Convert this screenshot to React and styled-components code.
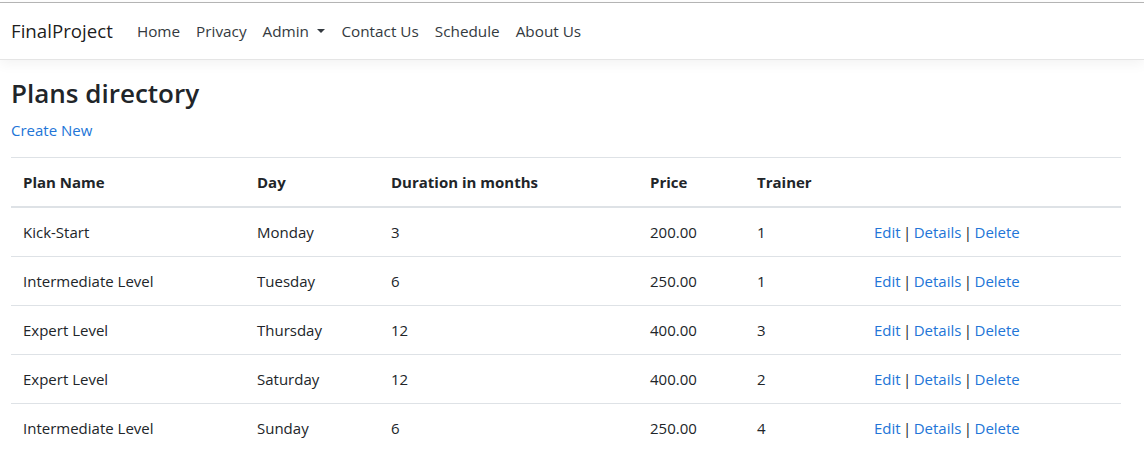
import React from "react";
import styled, { createGlobalStyle } from "styled-components";

const GlobalStyle = createGlobalStyle`
  html, body {
    margin: 0;
    padding: 0;
    background: #fff;
  }
  body {
    font-family: "Segoe UI", "Open Sans", "Noto Sans", sans-serif;
    font-size: 15px;
    line-height: 24px;
    color: #212529;
  }
  * { box-sizing: border-box; }
`;

const Header = styled.header`
  margin-top: 2px;
  border-top: 1px solid #b4b4b4;
  background: #fff;
  border-bottom: 1px solid #e5e5e5;
  box-shadow: 0 4px 12px rgba(0, 0, 0, 0.05);
  margin-bottom: 16px;
`;

const Navbar = styled.nav`
  display: flex;
  align-items: center;
  height: 56px;
  padding: 0 11px;
`;

const Brand = styled.a`
  font-size: 18.7px;
  line-height: 30px;
  color: rgba(0, 0, 0, 0.9);
  text-decoration: none;
  margin-right: 16px;
`;

const NavList = styled.ul`
  display: flex;
  list-style: none;
  margin: 0;
  padding: 0;
`;

const NavLink = styled.a`
  display: block;
  padding: 8px;
  font-size: 15.3px;
  color: #343a40;
  text-decoration: none;
  line-height: 24px;

  ${(p) =>
    p.$dropdown &&
    `
    &::after {
      content: "";
      display: inline-block;
      margin-left: 0.55em;
      vertical-align: 0.255em;
      border-top: 0.3em solid;
      border-right: 0.3em solid transparent;
      border-left: 0.3em solid transparent;
    }
  `}
`;

const Main = styled.main`
  padding: 0 11px;
`;

const Content = styled.div`
  width: 1110px;
`;

const Title = styled.h1`
  margin: 0 0 8px;
  font-size: 26px;
  font-weight: 600;
  line-height: 34px;
`;

const Para = styled.p`
  margin: 0 0 15px;
`;

const Link = styled.a`
  color: #2275d7;
  text-decoration: none;
`;

const Table = styled.table`
  width: 100%;
  border-collapse: collapse;
  table-layout: fixed;
`;

const Th = styled.th`
  text-align: left;
  font-weight: 700;
  padding: 12px;
  border-top: 1px solid #dee2e6;
  border-bottom: 2px solid #dee2e6;
  width: ${(p) => p.$w}px;
`;

const Td = styled.td`
  padding: 12px;
  border-top: 1px solid #dee2e6;
  white-space: nowrap;
  word-spacing: ${(p) => (p.$actions ? "-1.5px" : "normal")};
`;

const Sep = styled.span`
  color: #212529;
`;

const cols = [
  ["Plan Name", 234],
  ["Day", 134],
  ["Duration in months", 259],
  ["Price", 107],
  ["Trainer", 117],
  ["", 259],
];

const plans = [
  ["Kick-Start", "Monday", "3", "200.00", "1"],
  ["Intermediate Level", "Tuesday", "6", "250.00", "1"],
  ["Expert Level", "Thursday", "12", "400.00", "3"],
  ["Expert Level", "Saturday", "12", "400.00", "2"],
  ["Intermediate Level", "Sunday", "6", "250.00", "4"],
];

export default function App() {
  return (
    <>
      <GlobalStyle />
      <Header>
        <Navbar>
          <Brand href="#">FinalProject</Brand>
          <NavList>
            <li><NavLink href="#">Home</NavLink></li>
            <li><NavLink href="#">Privacy</NavLink></li>
            <li><NavLink href="#" $dropdown>Admin</NavLink></li>
            <li><NavLink href="#">Contact Us</NavLink></li>
            <li><NavLink href="#">Schedule</NavLink></li>
            <li><NavLink href="#">About Us</NavLink></li>
          </NavList>
        </Navbar>
      </Header>
      <Main>
        <Content>
          <Title>Plans directory</Title>
          <Para>
            <Link href="#">Create New</Link>
          </Para>
          <Table>
            <thead>
              <tr>
                {cols.map(([name, w], i) => (
                  <Th key={i} $w={w}>{name}</Th>
                ))}
              </tr>
            </thead>
            <tbody>
              {plans.map((row, i) => (
                <tr key={i}>
                  {row.map((v, j) => (
                    <Td key={j}>{v}</Td>
                  ))}
                  <Td $actions>
                    <Link href="#">Edit</Link> <Sep>|</Sep>{" "}
                    <Link href="#">Details</Link> <Sep>|</Sep>{" "}
                    <Link href="#">Delete</Link>
                  </Td>
                </tr>
              ))}
            </tbody>
          </Table>
        </Content>
      </Main>
    </>
  );
}
